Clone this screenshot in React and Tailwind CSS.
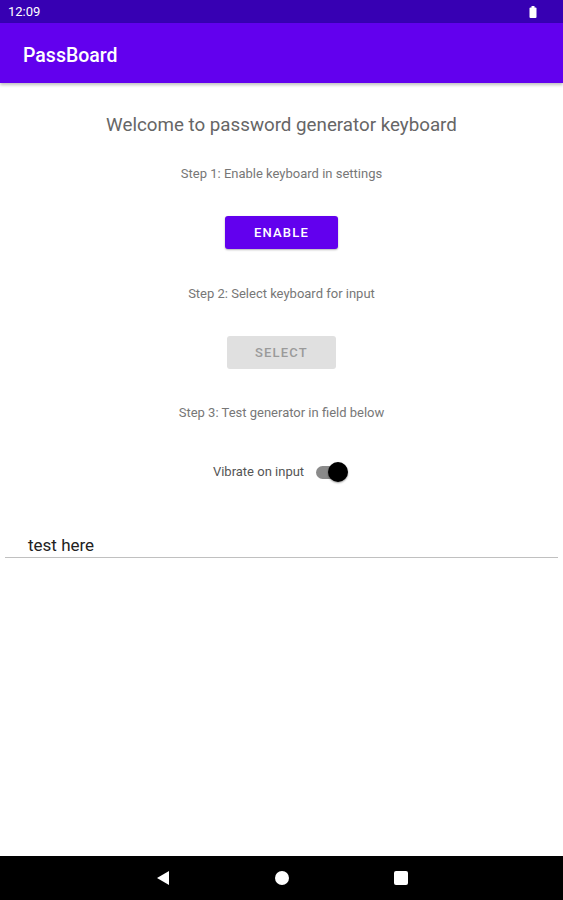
export default function App() {
  return (
    <div className="flex h-[900px] w-[563px] flex-col bg-white font-['Roboto',sans-serif]">
      {/* status bar */}
      <div className="flex h-[23px] items-center justify-between bg-[#3700b3] pl-[8px] pr-[26px] text-[13px] text-white">
        <span>12:09</span>
        <svg width="8" height="12" viewBox="0 0 8 12">
          <rect x="2.5" y="0" width="3" height="2" fill="white" />
          <rect x="0.5" y="1.5" width="7" height="10.5" rx="1" fill="white" />
        </svg>
      </div>

      {/* app bar */}
      <div className="flex h-[60px] items-center bg-[#6200ee] px-[23px] pt-[5px] shadow-[0_2px_3px_rgba(0,0,0,0.25)]">
        <span className="text-[19.5px] font-medium text-white">PassBoard</span>
      </div>

      <div className="flex flex-1 flex-col items-center">
        <div className="mt-[30px] text-[18.75px] leading-[24px] text-[#666]">Welcome to password generator keyboard</div>
        <div className="mt-[29px] text-[13px] leading-[16px] text-[#777]">Step 1: Enable keyboard in settings</div>
        <button className="mt-[34px] flex h-[33px] w-[113px] items-center justify-center rounded-[3px] bg-[#6200ee] text-[13px] font-medium tracking-[1.2px] text-white shadow-[0_1px_2px_rgba(0,0,0,0.3)]">
          ENABLE
        </button>
        <div className="mt-[37px] text-[13px] leading-[16px] text-[#777]">Step 2: Select keyboard for input</div>
        <button className="mt-[34px] flex h-[33px] w-[109px] items-center justify-center rounded-[3px] bg-[#e0e0e0] text-[13px] font-medium tracking-[1.2px] text-[#9a9a9a]">
          SELECT
        </button>
        <div className="mt-[36px] text-[13px] leading-[16px] text-[#777]">Step 3: Test generator in field below</div>
        <div className="mt-[41px] flex items-center gap-[10px] pr-[2px]">
          <span className="text-[13px] text-[#555]">Vibrate on input</span>
          <div className="relative h-[20px] w-[34px]">
            <div className="absolute left-[2px] top-[4px] h-[13px] w-[28px] rounded-full bg-[#8a8a8a]" />
            <div className="absolute right-0 top-0 h-[20px] w-[20px] rounded-full bg-black shadow-[0_1px_2px_rgba(0,0,0,0.4)]" />
          </div>
        </div>
        <div className="mt-[53px] w-[553px] border-b border-[#c0c0c0] pb-[2px] pl-[23px] text-[17px] leading-[20px] text-[#222]">
          test here
        </div>
      </div>

      {/* nav bar */}
      <div className="flex h-[44px] items-center justify-center gap-[105px] bg-black">
        <svg width="14" height="16" viewBox="0 0 14 16">
          <polygon points="13,1 13,15 1,8" fill="white" />
        </svg>
        <div className="h-[14px] w-[14px] rounded-full bg-white" />
        <div className="h-[14px] w-[14px] rounded-[2px] bg-white" />
      </div>
    </div>
  );
}
